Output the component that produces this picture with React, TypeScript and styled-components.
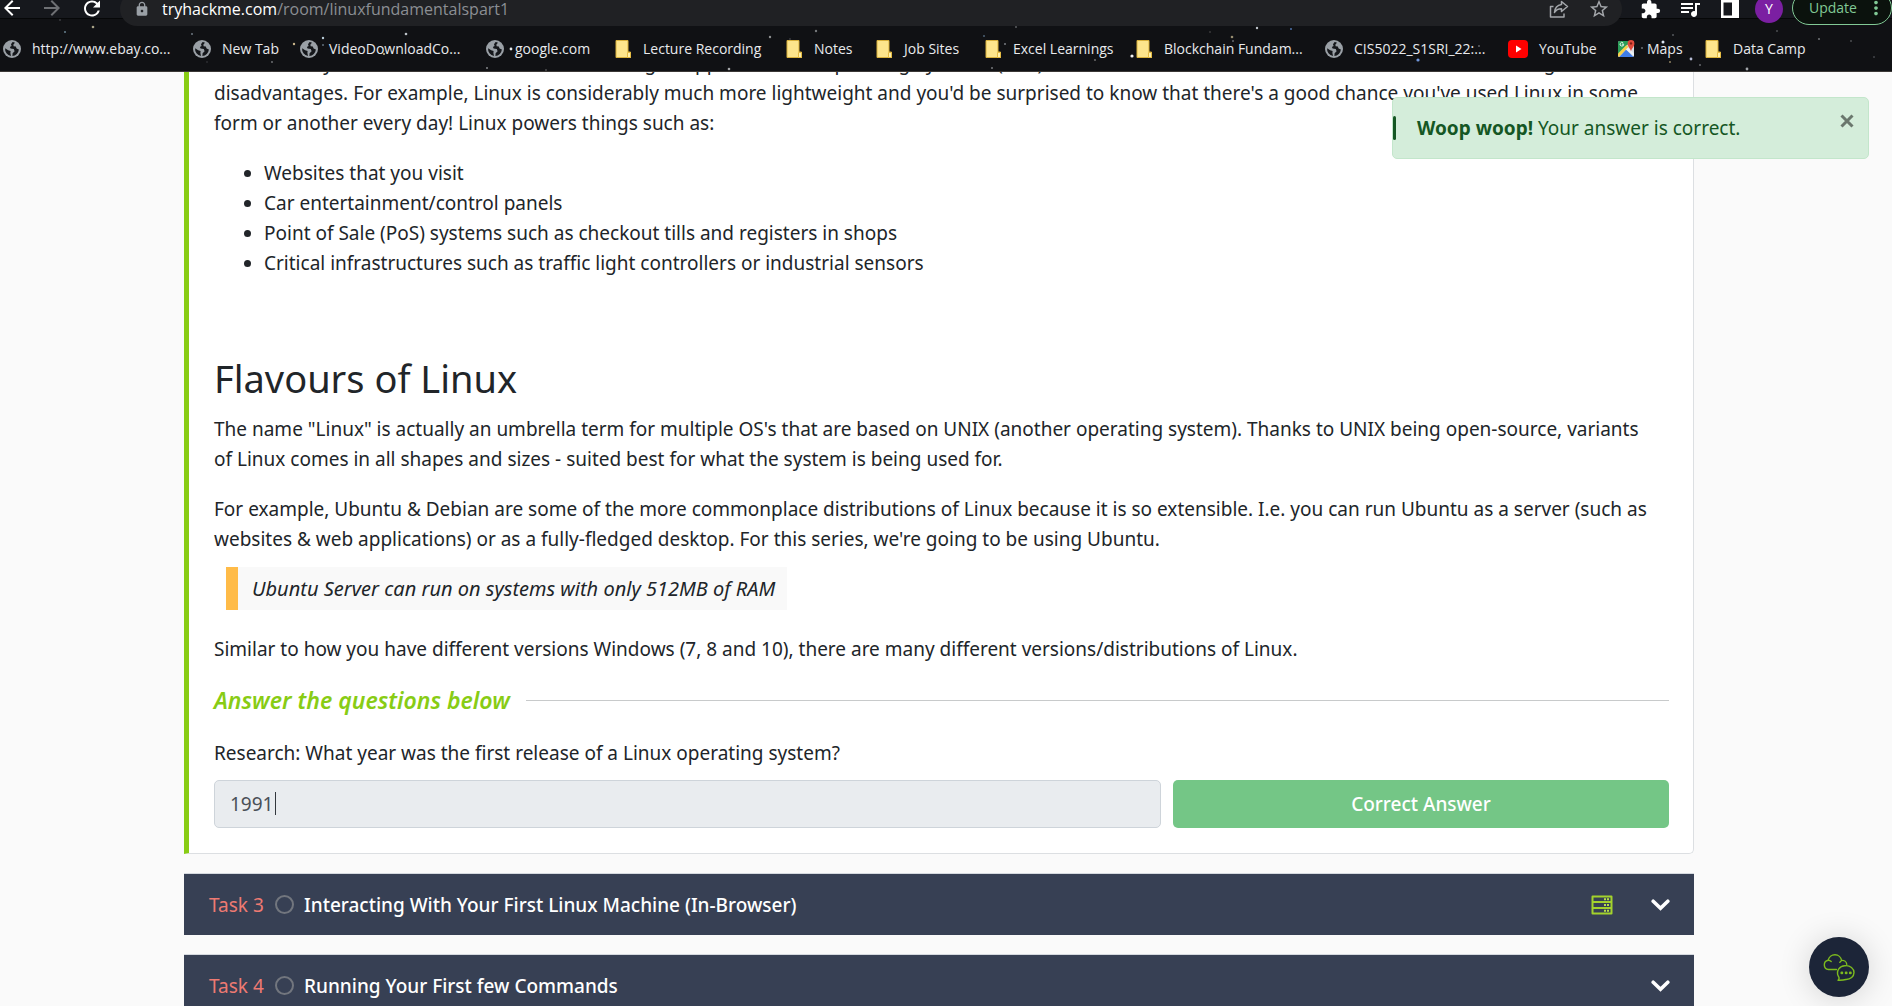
import React from "react";
import styled, { createGlobalStyle } from "styled-components";
import { MdArrowBack, MdArrowForward, MdRefresh, MdLock, MdStarBorder, MdExtension, MdQueueMusic, MdMoreVert } from "react-icons/md";

const GlobalStyle = createGlobalStyle`
  *, *::before, *::after { box-sizing: border-box; }
  body {
    margin: 0;
    background: #fafafa;
    color: #212529;
    font-family: "Noto Sans", "Open Sans", sans-serif;
    font-size: 19px;
    line-height: 30px;
    overflow: hidden;
  }
  p, ul, h2, h3, blockquote { margin: 0; }
  button, input { font: inherit; }
`;

const Window = styled.div`
  display: flex;
  flex-direction: column;
  height: 100vh;
`;

/* ---------- browser chrome ---------- */

const Chrome = styled.header`
  position: relative;
  z-index: 2;
  flex: none;
  background: linear-gradient(#16181d 0 18px, #060708 18px 19px, #101114 19px);
  border-bottom: 1px solid #3b3836;
  color: #e8eaed;
  font-family: "Open Sans", "Noto Sans", sans-serif;
  overflow: hidden;
`;

const Stars = styled.svg`
  position: absolute;
  inset: 0;
  width: 100%;
  height: 100%;
  pointer-events: none;
`;

const Toolbar = styled.div`
  display: flex;
  align-items: flex-end;
  height: 26px;
`;

const NavButtons = styled.nav`
  display: flex;
  gap: 16px;
  width: 120px;
  flex: none;
  height: 36px;
`;

const ChromeButton = styled.button<{ $dim?: boolean }>`
  display: flex;
  align-items: center;
  justify-content: center;
  width: 24px;
  height: 36px;
  padding: 0;
  border: 0;
  background: none;
  color: ${(p) => (p.$dim ? "#6e7074" : "#ffffff")};
`;

const AddressBar = styled.div`
  position: relative;
  display: flex;
  align-items: center;
  gap: 12px;
  flex: 1;
  height: 34px;
  padding: 0 11px 0 14px;
  border-radius: 17px;
  background: #202124;
  color: #9aa0a6;
`;

const Address = styled.div`
  flex: 1;
  font-size: 16px;
  line-height: 34px;
  color: #8b8e93;

  b {
    font-weight: 400;
    color: #ffffff;
  }
`;

const AddressActions = styled.div`
  display: flex;
  gap: 16px;

  button {
    color: #a4a7ab;
  }
`;

const Extensions = styled.div`
  position: relative;
  display: flex;
  align-items: center;
  flex: none;
  gap: 16px;
  height: 34px;
  padding-left: 16px;
`;

const Profile = styled.div`
  position: relative;
  display: flex;
  align-items: center;
  flex: none;
  gap: 9px;
  height: 34px;
  padding-left: 13px;
`;

const Avatar = styled.button`
  width: 28px;
  height: 28px;
  padding: 0;
  border: 0;
  border-radius: 50%;
  background: #7b1fa2;
  color: #fff;
  font-size: 14px;
  line-height: 28px;
`;

const UpdateButton = styled.button`
  display: flex;
  align-items: center;
  justify-content: space-between;
  width: 100px;
  height: 34px;
  margin-bottom: 2px;
  padding: 0 4px 0 16px;
  border: 1px solid #81c995;
  border-radius: 17px;
  background: #0b120d;
  color: #81c995;
  font-size: 14px;
  line-height: 20px;
`;

const Bookmarks = styled.nav`
  position: relative;
  display: flex;
  gap: 22px;
  height: 45px;
  padding-left: 3px;
`;

const Bookmark = styled.a<{ $width: number }>`
  display: flex;
  align-items: center;
  gap: 11px;
  flex: none;
  width: ${(p) => p.$width}px;
  color: #e8eaed;
  font-size: 14px;
  line-height: 20px;
  text-decoration: none;
  white-space: nowrap;

  svg {
    flex: none;
  }
`;

/* ---------- room page ---------- */

const Page = styled.main`
  flex: 1;
  min-height: 0;
  overflow: hidden;
  padding: 0 198px 0 184px;
`;

const TaskCard = styled.section`
  margin-top: -24px;
  padding: 0 24px 25px 25px;
  border: 1px solid #dcdfe2;
  border-top: 0;
  border-left: 5px solid #88cc14;
  border-radius: 0 0 5px 0;
  background: #fff;
`;

const Paragraph = styled.p`
  margin-bottom: 20px;
  padding-right: 12px;
`;

const BulletList = styled.ul`
  padding-left: 50px;
  margin-bottom: 76px;
`;

const Title = styled.h2`
  margin-bottom: 12px;
  font-size: 38px;
  font-weight: 400;
  line-height: 48px;
`;

const Quote = styled.blockquote`
  width: fit-content;
  margin: -7px 12px 24px;
  padding: 7px 12px 6px 14px;
  border-left: 12px solid #ffbb48;
  background: #f9f9f9;
  font-size: 20px;
  font-style: italic;
`;

const Questions = styled.h3`
  display: flex;
  align-items: center;
  gap: 16px;
  margin-bottom: 22px;
  color: #88cc14;
  font-size: 23px;
  font-style: italic;
  font-weight: 600;
  line-height: 32px;

  &::after {
    content: "";
    flex: 1;
    height: 1px;
    background: #c8cacb;
  }
`;

const AnswerForm = styled.form`
  display: grid;
  grid-template-columns: 21fr 11fr;
  column-gap: 12px;
`;

const Question = styled.label`
  grid-column: 1 / -1;
  margin-bottom: 12px;
`;

const AnswerField = styled.div`
  position: relative;
`;

const AnswerInput = styled.input`
  display: block;
  width: 100%;
  height: 48px;
  padding: 0 15px;
  border: 1px solid #ced4da;
  border-radius: 5px;
  background: #e9ecef;
  color: #495057;
`;

const Caret = styled.span`
  position: absolute;
  top: 12px;
  left: 61px;
  width: 1px;
  height: 23px;
  background: #33383d;
`;

const SubmitButton = styled.button`
  height: 48px;
  padding: 0;
  border: 0;
  border-radius: 5px;
  background: #74c686;
  color: #fff;
  font-weight: 500;
`;

const TaskHeader = styled.button`
  display: flex;
  align-items: center;
  width: 100%;
  height: 62px;
  margin-top: 19px;
  padding: 0 24px 0 25px;
  border: 0;
  border-top: 1px solid #d5d9df;
  background: #374054;
  color: #fff;
  font-weight: 500;
  text-align: left;
`;

const TaskNumber = styled.span`
  color: #ee7a72;
  font-weight: 400;
  width: 66px;
`;

const TaskStatus = styled.span`
  width: 19px;
  height: 19px;
  margin-right: 10px;
  border: 2px solid #72767e;
  border-radius: 50%;
`;

const TaskTitle = styled.span`
  flex: 1;
`;

const TaskIcons = styled.span`
  display: flex;
  align-items: center;
  gap: 38px;
`;

/* ---------- floating pieces ---------- */

const Toast = styled.div`
  position: fixed;
  z-index: 3;
  top: 97px;
  right: 23px;
  display: flex;
  align-items: center;
  width: 477px;
  height: 62px;
  border: 1px solid #c3e6cb;
  border-radius: 5px;
  background: #d4edda;
  color: #155724;

  &::before {
    content: "";
    width: 3px;
    height: 24px;
    margin-right: 21px;
    border-radius: 2px;
    background: #155724;
  }
`;

const ToastText = styled.p`
  flex: 1;
`;

const CloseButton = styled.button`
  align-self: flex-start;
  display: flex;
  margin: 16px 14px 0 0;
  padding: 0;
  border: 0;
  background: none;
  color: #6a776d;
`;

const ChatButton = styled.button`
  position: fixed;
  right: 23px;
  bottom: 9px;
  display: flex;
  align-items: center;
  justify-content: center;
  width: 60px;
  height: 60px;
  padding: 0;
  border: 0;
  border-radius: 50%;
  background: #1c2538;
  box-shadow: 0 2px 32px rgba(0, 0, 0, 0.16);
`;

/* ---------- drawings ---------- */

const Globe = () => (
  <svg width="18" height="18" viewBox="0 0 18 18" aria-hidden>
    <circle cx="9" cy="9" r="9" fill="#9aa0a6" />
    <path d="M9.6 2.1 8 4.2 8.6 6 6.9 7 7.6 8.6 10.8 9 11.6 11.2 9.6 13.2 9.4 15.9A7 7 0 0 0 15.9 9.6L13.6 8.6 12.8 6.6 10.6 6.2 10.4 4.4 12 2.7A7 7 0 0 0 9.6 2.1Z" fill="#15171b" />
    <path d="M2.1 8.2 5.2 10.2 7.6 11 7.4 13 8 15.9A7 7 0 0 1 2.1 8.2Z" fill="#15171b" />
  </svg>
);

const Folder = () => (
  <svg width="17" height="18" viewBox="0 0 17 18" aria-hidden>
    <path d="M1 .5H13V12H15.5V17.5H1Z" fill="#fde58c" stroke="#d9b13b" />
    <path d="M12.5 17.5V12.5H15.5V17.5Z" fill="#fff0ad" stroke="#e4bb43" />
  </svg>
);

const YouTube = () => (
  <svg width="20" height="18" viewBox="0 0 20 18" aria-hidden>
    <rect width="20" height="18" rx="4" fill="#f00" />
    <path d="M8 5.500v7l5.500-3.500z" fill="#fff" />
  </svg>
);

const Maps = () => (
  <svg width="19" height="19" viewBox="0 0 19 19" aria-hidden>
    <rect x="1" y="2" width="16" height="16" rx="1.5" fill="#d9dde3" />
    <path d="M1 3.5Q1 2 2.500 2H14L1 16Z" fill="#2a9d58" />
    <path d="M2 18 9 10.500 16.500 18Z" fill="#3f7de8" />
    <path d="M1 14.500 9.500 6 11.500 8 2 18 1 17Z" fill="#f7d04b" />
    <path d="M9 10.500 11 8.500 17 14.500V17Z" fill="#eef1f4" />
    <path d="M14 12.500C13.600 9.300 10.600 8 10.600 4.400A3.400 3.400 0 0 1 17.400 4.400C17.400 8 14.400 9.300 14 12.500Z" fill="#e04a3b" />
    <circle cx="14" cy="4.400" r="1.200" fill="#7f1f17" />
    <path d="M6.600 5.200H4.900M6.200 4A1.800 1.800 0 1 0 6.700 5.300" fill="none" stroke="#fff" strokeWidth="0.900" />
  </svg>
);

const Share = () => (
  <svg width="20" height="20" viewBox="0 0 20 20" fill="none" stroke="currentColor" strokeWidth="1.500" strokeLinejoin="round" aria-hidden>
    <path d="M4.500 7.500H1.500V18H15V14.500" />
    <path d="M12.500 2.500 18.500 7.500 12.500 12.500V9.700C9 9.700 7 10.800 5.500 13.500 5.800 8.700 8.500 5.900 12.500 5.400Z" />
  </svg>
);

const SidePanel = () => (
  <svg width="18" height="18" viewBox="0 0 18 18" aria-hidden>
    <path fillRule="evenodd" d="M0 0H18V18H0ZM2.500 2.500V15.500H11V2.500Z" fill="#fff" />
  </svg>
);

const Server = () => (
  <svg width="22" height="20" viewBox="0 0 22 20" fill="none" aria-hidden>
    <path d="M1.500 1.500H20.500V18.500H1.500ZM1.500 7H20.500M1.500 13H20.500" stroke="#a3d22c" strokeWidth="2" strokeLinejoin="round" />
    <path d="M13 4.200H15M16 4.200H18M13 10H15M16 10H18M13 15.700H15M16 15.700H18" stroke="#b8e04a" strokeWidth="2" />
  </svg>
);

const Chevron = () => (
  <svg width="19" height="12" viewBox="0 0 19 12" fill="none" aria-hidden>
    <path d="M2.200 2.200 9.500 9.200 16.800 2.200" stroke="#fff" strokeWidth="3.600" strokeLinecap="round" />
  </svg>
);

const Cross = () => (
  <svg width="14" height="14" viewBox="0 0 14 14" aria-hidden>
    <path d="M1.500 1.500 12.500 12.500M12.500 1.500 1.500 12.500" stroke="currentColor" strokeWidth="3" />
  </svg>
);

const CloudChat = () => (
  <svg width="32" height="28" viewBox="0 0 32 28" fill="none" stroke="#7dbb1e" strokeWidth="1.400" strokeLinecap="round" strokeLinejoin="round" aria-hidden>
    <path d="M13.500 16.500H5.500A4.700 4.700 0 0 1 5.200 7.200 6.800 6.800 0 0 1 18.600 7.500 4.600 4.600 0 0 1 23.800 11.300" />
    <path d="M5.200 7.200A4 4 0 0 1 8.200 8.500M18.600 7.500A5 5 0 0 0 16.800 9.300" />
    <path d="M15 27.200C16.500 26 16.200 24.500 15.300 23.200A7.300 7.300 0 0 1 22.300 12.700C27.200 12.300 31 15.600 31 19.600 31 23.600 27.500 26.600 22.800 26.500 20 27.400 17.500 27.300 15 27.200Z" />
    <path d="M18.700 19.900H19M23 19.900H23.300M27.200 19.900H27.500" strokeWidth="2.600" />
  </svg>
);

const stars: [number, number, number, string][] = [
  [93, 27, 1.3, "#a8a287"], [65, 32, 1, "#67808f"], [60, 20, 0.8, "#55585c"], [192, 34, 1, "#6d7780"],
  [294, 44, 1.2, "#c9b58c"], [323, 38, 1.2, "#b8cbd8"], [323, 45, 1, "#62707c"], [272, 62, 0.9, "#76797d"],
  [384, 54, 1, "#d5c68f"], [406, 34, 1.3, "#bcc2c8"], [511, 49, 1.4, "#e6e8ea"], [487, 68, 1, "#838689"],
  [546, 70, 0.8, "#777"], [770, 37, 1.2, "#8e9092"], [816, 31, 1.2, "#74777a"], [729, 69, 1.3, "#a3a5a7"],
  [790, 39, 0.8, "#52565a"], [984, 36, 1, "#4d6275"], [1005, 44, 1, "#777b80"], [1132, 56, 1.6, "#f2f2f2"],
  [1232, 37, 1.3, "#978d70"], [1233, 41, 1, "#65686c"], [992, 68, 1, "#76797c"], [1016, 27, 1, "#5b5e61"],
  [1257, 28, 1.2, "#bfc4cb"], [1291, 29, 1, "#4d71a8"], [1418, 60, 1.6, "#7197dc"], [1479, 46, 1, "#5f6266"],
  [1663, 42, 1.5, "#dce6f3"], [1642, 48, 1, "#6c7074"], [1691, 59, 1.4, "#b7bdd6"], [1747, 69, 1.4, "#a1a4a8"],
  [1670, 62, 1, "#8e8161"], [1700, 65, 1, "#66696c"], [1819, 39, 1.1, "#6b6e71"], [1777, 31, 1, "#4b4e51"],
  [1851, 41, 1, "#4b4e51"], [1673, 35, 1, "#55585c"], [1874, 57, 1, "#424548"], [90, 57, 0.8, "#66696c"],
  [207, 62, 0.8, "#3e4144"], [702, 54, 0.8, "#777"], [1095, 60, 0.9, "#777"], [1210, 32, 0.8, "#555"],
];

const bookmarks: { icon: React.FC; label: string; width: number }[] = [
  { icon: Globe, label: "http://www.ebay.co...", width: 168 },
  { icon: Globe, label: "New Tab", width: 85 },
  { icon: Globe, label: "VideoDownloadCo...", width: 164 },
  { icon: Globe, label: "google.com", width: 107 },
  { icon: Folder, label: "Lecture Recording", width: 149 },
  { icon: Folder, label: "Notes", width: 68 },
  { icon: Folder, label: "Job Sites", width: 87 },
  { icon: Folder, label: "Excel Learnings", width: 129 },
  { icon: Folder, label: "Blockchain Fundam...", width: 167 },
  { icon: Globe, label: "CIS5022_S1SRI_22:...", width: 161 },
  { icon: YouTube, label: "YouTube", width: 87 },
  { icon: Maps, label: "Maps", width: 66 },
  { icon: Folder, label: "Data Camp", width: 102 },
];

const tasks = [
  { number: "Task 3", title: "Interacting With Your First Linux Machine (In-Browser)", machine: true },
  { number: "Task 4", title: "Running Your First few Commands", machine: false },
];

export default function App() {
  return (
    <Window>
      <GlobalStyle />
      <Chrome>
        <Stars aria-hidden>
          {stars.map(([x, y, r, fill]) => (
            <circle key={`${x}-${y}`} cx={x} cy={y} r={r} fill={fill} />
          ))}
        </Stars>
        <Toolbar>
          <NavButtons>
            <ChromeButton aria-label="Back"><MdArrowBack size={24} /></ChromeButton>
            <ChromeButton aria-label="Forward" $dim><MdArrowForward size={24} /></ChromeButton>
            <ChromeButton aria-label="Reload"><MdRefresh size={25} /></ChromeButton>
          </NavButtons>
          <AddressBar>
            <MdLock size={16} />
            <Address><b>tryhackme.com</b>/room/linuxfundamentalspart1</Address>
            <AddressActions>
              <ChromeButton aria-label="Share"><Share /></ChromeButton>
              <ChromeButton aria-label="Bookmark this page"><MdStarBorder size={22} /></ChromeButton>
            </AddressActions>
          </AddressBar>
          <Extensions>
            <ChromeButton aria-label="Extensions"><MdExtension size={21} /></ChromeButton>
            <ChromeButton aria-label="Media"><MdQueueMusic size={26} /></ChromeButton>
            <ChromeButton aria-label="Side panel"><SidePanel /></ChromeButton>
          </Extensions>
          <Profile>
            <Avatar aria-label="Profile">Y</Avatar>
            <UpdateButton>Update<MdMoreVert size={22} /></UpdateButton>
          </Profile>
        </Toolbar>
        <Bookmarks>
          {bookmarks.map(({ icon: Icon, label, width }) => (
            <Bookmark key={label} href="#" $width={width}>
              <Icon />
              {label}
            </Bookmark>
          ))}
        </Bookmarks>
      </Chrome>

      <Page>
        <TaskCard>
          <Paragraph>
            It's fair to say that Linux is a lot more intimidating to approach than Operating System's (OSs) such as Windows. Both variants have their own advantages and
            disadvantages. For example, Linux is considerably much more lightweight and you'd be surprised to know that there's a good chance you've used Linux in some
            form or another every day! Linux powers things such as:
          </Paragraph>
          <BulletList>
            <li>Websites that you visit</li>
            <li>Car entertainment/control panels</li>
            <li>Point of Sale (PoS) systems such as checkout tills and registers in shops</li>
            <li>Critical infrastructures such as traffic light controllers or industrial sensors</li>
          </BulletList>
          <Title>Flavours of Linux</Title>
          <Paragraph>
            The name "Linux" is actually an umbrella term for multiple OS's that are based on UNIX (another operating system). Thanks to UNIX being open-source, variants
            of Linux comes in all shapes and sizes - suited best for what the system is being used for.
          </Paragraph>
          <Paragraph>
            For example, Ubuntu &amp; Debian are some of the more commonplace distributions of Linux because it is so extensible. I.e. you can run Ubuntu as a server (such as
            websites &amp; web applications) or as a fully-fledged desktop. For this series, we're going to be using Ubuntu.
          </Paragraph>
          <Quote>Ubuntu Server can run on systems with only 512MB of RAM</Quote>
          <Paragraph>
            Similar to how you have different versions Windows (7, 8 and 10), there are many different versions/distributions of Linux.
          </Paragraph>
          <Questions>Answer the questions below</Questions>
          <AnswerForm onSubmit={(e) => e.preventDefault()}>
            <Question htmlFor="answer">Research: What year was the first release of a Linux operating system?</Question>
            <AnswerField>
              <AnswerInput id="answer" defaultValue="1991" readOnly />
              <Caret />
            </AnswerField>
            <SubmitButton type="submit">Correct Answer</SubmitButton>
          </AnswerForm>
        </TaskCard>
        {tasks.map((task) => (
          <TaskHeader key={task.number}>
            <TaskNumber>{task.number}</TaskNumber>
            <TaskStatus />
            <TaskTitle>{task.title}</TaskTitle>
            <TaskIcons>
              {task.machine && <Server />}
              <Chevron />
            </TaskIcons>
          </TaskHeader>
        ))}
      </Page>

      <Toast role="alert">
        <ToastText><strong>Woop woop!</strong> Your answer is correct.</ToastText>
        <CloseButton aria-label="Close"><Cross /></CloseButton>
      </Toast>
      <ChatButton aria-label="Open chat"><CloudChat /></ChatButton>
    </Window>
  );
}
